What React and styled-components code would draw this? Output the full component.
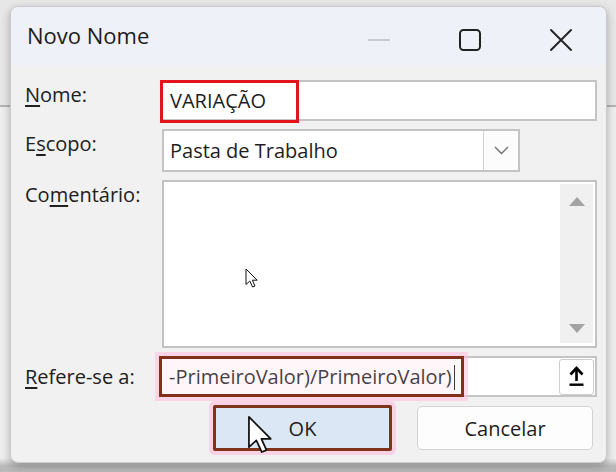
import React from "react";
import styled, { createGlobalStyle } from "styled-components";

const GlobalStyle = createGlobalStyle`
  * { box-sizing: border-box; }
  body {
    margin: 0;
    font-family: "Open Sans", "Noto Sans", sans-serif;
    color: #1e1e1e;
  }
`;

const Backdrop = styled.div`
  width: 616px;
  height: 472px;
  overflow: hidden;
  padding: 6px 9px 0 10px;
  background: linear-gradient(
    #e7e7e7 0 105px,
    #b4b4b4 105px 107px,
    #eeeeee 107px 458px,
    #b9b9b9 466px
  );
`;

const Window = styled.div`
  width: 597px;
  height: 457px;
  border: 1px solid #cacaca;
  border-radius: 8px;
  overflow: hidden;
  background: #f1f1f1;
  box-shadow: 0 3px 9px rgba(0, 0, 0, 0.28);
  display: flex;
  flex-direction: column;
`;

const TitleBar = styled.div`
  height: 58px;
  flex-shrink: 0;
  background: #eef2f8;
  display: flex;
  align-items: center;
  padding-left: 16px;
`;

const Title = styled.div`
  flex: 1;
  font-size: 22px;
  color: #1c1c1c;
  padding-bottom: 2px;
`;

const Controls = styled.div`
  display: flex;
  height: 100%;
`;

const ControlButton = styled.div`
  width: 91px;
  display: flex;
  align-items: center;
  justify-content: center;
  padding-top: 8px;
`;

const Body = styled.div`
  flex: 1;
  display: grid;
  grid-template-columns: 135px 1fr;
  grid-template-rows: 41px 43px 168px 41px 46px;
  row-gap: 8px;
  padding: 15px 9px 0 14px;
`;

const Label = styled.div`
  font-size: 20px;
  line-height: 24px;
  color: #202020;
  padding-top: ${(p) => (p.$center ? 0 : 3)}px;
  align-self: ${(p) => (p.$center ? "center" : "start")};
`;

const Key = styled.span`
  text-decoration: underline;
  text-decoration-thickness: 1.5px;
  text-underline-offset: 3px;
`;

const Field = styled.div`
  position: relative;
  display: flex;
  align-items: center;
  margin-left: ${(p) => p.$inset || 0}px;
  width: ${(p) => (p.$width ? `${p.$width}px` : "auto")};
  background: #ffffff;
  border: 2px solid #c4c4c4;
`;

const FieldText = styled.div`
  flex: 1;
  font-size: 20px;
  line-height: 30px;
  padding-left: ${(p) => p.$pad || 8}px;
  white-space: nowrap;
`;

const Caret = styled.span`
  display: inline-block;
  width: 1.5px;
  height: 25px;
  margin-left: 2px;
  vertical-align: -6px;
  background: #1a1a1a;
`;

const DropButton = styled.div`
  width: 35px;
  align-self: stretch;
  display: flex;
  align-items: center;
  justify-content: center;
  border-left: 1px solid #d2d2d2;
  background: #fcfcfc;
`;

const TextArea = styled.div`
  position: relative;
  margin-left: 2px;
  display: flex;
  justify-content: flex-end;
  padding: 2px 2px 3px;
  background: #ffffff;
  border: 2px solid #c2c2c2;
`;

const ScrollTrack = styled.div`
  width: 33px;
  background: #f0f0f0;
  display: flex;
  flex-direction: column;
  align-items: center;
  justify-content: space-between;
  padding: 13px 0 10px;
`;

const UploadButton = styled.div`
  width: 35px;
  height: 36px;
  margin-right: 1px;
  display: flex;
  align-items: center;
  justify-content: center;
  background: #ffffff;
  border: 1px solid #cdcdcd;
  border-radius: 3px;
`;

const Highlight = styled.div`
  position: absolute;
  left: ${(p) => p.$left}px;
  top: ${(p) => p.$top}px;
  width: ${(p) => p.$w}px;
  height: ${(p) => p.$h}px;
  border: 3px solid ${(p) => p.$color};
  pointer-events: none;
  box-shadow: ${(p) =>
    p.$glow ? "0 0 0 4px rgba(255, 190, 220, 0.55)" : "none"};
  background: ${(p) => (p.$glow ? "rgba(255, 205, 228, 0.18)" : "transparent")};
`;

const ButtonRow = styled.div`
  grid-column: 2;
  display: flex;
  justify-content: flex-end;
  align-items: center;
  gap: 25px;
  padding-right: 4px;
`;

const Button = styled.div`
  position: relative;
  width: ${(p) => p.$width}px;
  height: ${(p) => (p.$primary ? 46 : 44)}px;
  display: flex;
  align-items: center;
  justify-content: center;
  font-size: 20px;
  color: #1e1e1e;
  background: ${(p) => (p.$primary ? "#dce7f5" : "#fdfdfd")};
  border: ${(p) => (p.$primary ? "3px solid #7f331b" : "1px solid #d3d3d3")};
  border-radius: ${(p) => (p.$primary ? 2 : 5)}px;
  box-shadow: ${(p) =>
    p.$primary ? "0 0 0 4px rgba(255, 190, 220, 0.6)" : "none"};
`;

const Pointer = styled.svg`
  position: absolute;
  left: ${(p) => p.$left}px;
  top: ${(p) => p.$top}px;
  pointer-events: none;
`;

const arrowPath = "M1 1 L1 16.5 L4.8 13 L7.6 19 L10 18 L7.4 12.2 L12.2 12.2 Z";

function Cursor({ left, top, scale = 1 }) {
  return (
    <Pointer
      $left={left}
      $top={top}
      width={13 * scale}
      height={20 * scale}
      viewBox="0 0 13 20"
    >
      <path
        d={arrowPath}
        fill="#ffffff"
        stroke="#111111"
        strokeWidth={scale > 1 ? 0.9 : 1}
        strokeLinejoin="round"
      />
    </Pointer>
  );
}

export default function App() {
  return (
    <>
      <GlobalStyle />
      <Backdrop>
        <Window>
          <TitleBar>
            <Title>Novo Nome</Title>
            <Controls>
              <ControlButton>
                <svg width="22" height="4" viewBox="0 0 22 4">
                  <line x1="0" y1="2" x2="22" y2="2" stroke="#b9bec7" strokeWidth="1.5" />
                </svg>
              </ControlButton>
              <ControlButton>
                <svg width="22" height="22" viewBox="0 0 22 22">
                  <rect x="1" y="1" width="20" height="20" rx="3.5" fill="none" stroke="#222" strokeWidth="2" />
                </svg>
              </ControlButton>
              <ControlButton>
                <svg width="22" height="22" viewBox="0 0 22 22">
                  <path d="M1 1 L21 21 M21 1 L1 21" stroke="#222" strokeWidth="1.9" strokeLinecap="round" />
                </svg>
              </ControlButton>
            </Controls>
          </TitleBar>

          <Body>
            <Label>
              <Key>N</Key>ome:
            </Label>
            <Field>
              <FieldText $pad={8}>VARIAÇÃO</FieldText>
              <Highlight $left={-2} $top={-2} $w={139} $h={43} $color="#e3131c" />
            </Field>

            <Label>
              E<Key>s</Key>copo:
            </Label>
            <Field $inset={2} $width={358}>
              <FieldText $pad={6}>Pasta de Trabalho</FieldText>
              <DropButton>
                <svg width="15" height="9" viewBox="0 0 15 9">
                  <path d="M1 1 L7.5 7.5 L14 1" fill="none" stroke="#6e6e6e" strokeWidth="1.4" />
                </svg>
              </DropButton>
            </Field>

            <Label>
              Co<Key>m</Key>entário:
            </Label>
            <TextArea>
              <ScrollTrack>
                <svg width="16" height="9" viewBox="0 0 16 9">
                  <path d="M8 0 L16 9 L0 9 Z" fill="#a3a3a3" />
                </svg>
                <svg width="16" height="9" viewBox="0 0 16 9">
                  <path d="M0 0 L16 0 L8 9 Z" fill="#a3a3a3" />
                </svg>
              </ScrollTrack>
              <Cursor left={81} top={86} />
            </TextArea>

            <Label $center>
              <Key>R</Key>efere-se a:
            </Label>
            <Field>
              <FieldText $pad={7}>
                -PrimeiroValor)/PrimeiroValor)
                <Caret />
              </FieldText>
              <UploadButton>
                <svg width="15" height="21" viewBox="0 0 15 21">
                  <path d="M7.5 2 V15" stroke="#000" strokeWidth="2.6" />
                  <path d="M1.5 8.5 L7.5 2 L13.5 8.5" fill="none" stroke="#000" strokeWidth="2.6" />
                  <rect x="0.5" y="17.5" width="14" height="2.4" fill="#000" />
                </svg>
              </UploadButton>
              <Highlight $left={-3} $top={-2} $w={305} $h={41} $color="#80301b" $glow />
            </Field>

            <ButtonRow>
              <Button $primary $width={179}>
                OK
                <Cursor left={31} top={7} scale={1.95} />
              </Button>
              <Button $width={176}>Cancelar</Button>
            </ButtonRow>
          </Body>
        </Window>
      </Backdrop>
    </>
  );
}
